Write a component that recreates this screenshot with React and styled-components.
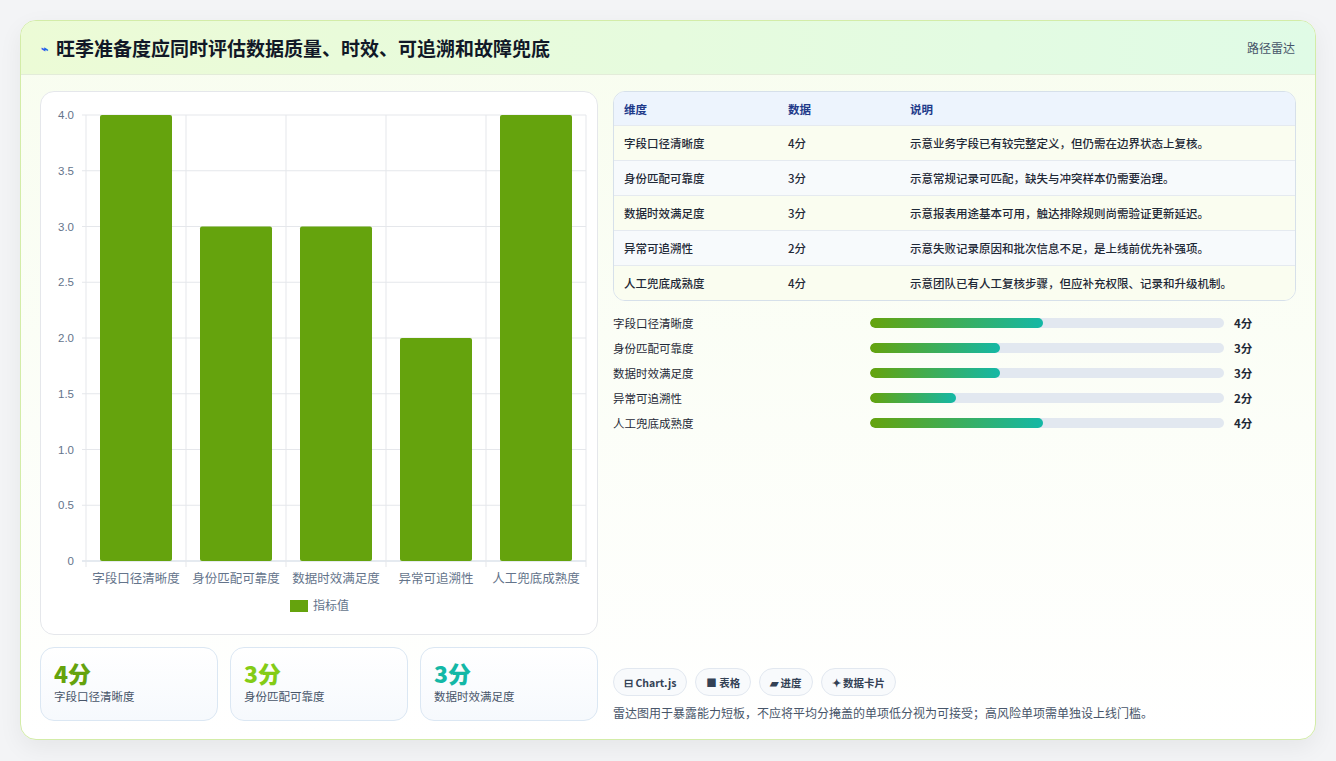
import React from "react";
import styled, { createGlobalStyle } from "styled-components";

const G = createGlobalStyle`
  html,body{margin:0;background:#f3f4f6;}
  body{font-family:"Noto Sans CJK SC","Noto Sans",sans-serif;}
  *{box-sizing:border-box;}
`;
const Page = styled.div`padding:20px;height:761px;`;
const Card = styled.div`
  width:1296px;height:720px;border:1px solid #d3eca8;border-radius:16px;overflow:hidden;
  background:linear-gradient(180deg,#f8fdef 0%,#ffffff 100%);
  box-shadow:0 8px 24px rgba(0,0,0,.06);display:flex;flex-direction:column;`;
const Header = styled.div`
  height:56px;display:flex;align-items:center;justify-content:space-between;padding:0 20px;
  background:linear-gradient(90deg,#ecfbd6,#e0fbe6);border-bottom:1px solid #e3ecd9;`;
const Title = styled.h1`margin:0;font-size:19px;font-weight:700;color:#111827;display:flex;align-items:center;gap:8px;`;
const Tag = styled.span`font-size:12px;color:#475569;`;
const Body = styled.div`flex:1;display:grid;grid-template-columns:558px 683px;gap:15px;padding:16px 19px 18px;`;
const Col = styled.div`display:flex;flex-direction:column;gap:12px;min-height:0;`;
const ChartBox = styled.div`height:544px;background:#fff;border:1px solid #e5e7eb;border-radius:14px;`;
const Stats = styled.div`display:grid;grid-template-columns:repeat(3,1fr);gap:12px;`;
const Stat = styled.div`height:74px;border:1px solid #dbe7f3;border-radius:14px;background:linear-gradient(180deg,#fff,#f6f9fd);padding:10px 13px;`;
const Num = styled.div`font-size:23px;font-weight:800;color:${p=>p.c};line-height:30px;`;
const StatLabel = styled.div`font-size:11.5px;color:#475569;`;
const Table = styled.div`border:1px solid #d6e0ea;border-radius:12px;overflow:hidden;background:#fff;`;
const Row = styled.div`display:grid;grid-template-columns:164px 122px 1fr;height:${p=>p.h}px;align-items:center;padding:0 10px;
  font-size:11.5px;color:${p=>p.head?"#1e3a8a":"#1f2937"};font-weight:${p=>p.head?700:500};
  background:${p=>p.head?"#edf4fd":p.alt?"#f7fafc":"#fafdf0"};border-top:${p=>p.first?"none":"1px solid #e5eaf0"};`;
const Bars = styled.div`display:flex;flex-direction:column;gap:7px;margin-top:1px;`;
const BarRow = styled.div`display:grid;grid-template-columns:257px 354px 1fr;gap:0;align-items:center;height:18px;font-size:11.5px;color:#1f2937;`;
const Track = styled.div`height:10px;border-radius:5px;background:#e2e8f0;overflow:hidden;`;
const Fill = styled.div`height:100%;border-radius:5px;background:linear-gradient(90deg,#65a30d,#14b8a6);`;
const Val = styled.span`padding-left:10px;font-weight:700;`;
const Spacer = styled.div`flex:1;`;
const Chips = styled.div`display:flex;gap:8px;`;
const Chip = styled.span`height:28px;padding:0 10px;border:1px solid #e2e8f0;border-radius:14px;background:#f8fafc;font-size:10.5px;font-weight:600;color:#334155;display:flex;align-items:center;gap:3px;`;
const Note = styled.p`margin:8px 0 0;font-size:12px;color:#475569;`;

const data=[["字段口径清晰度",4,"示意业务字段已有较完整定义，但仍需在边界状态上复核。"],["身份匹配可靠度",3,"示意常规记录可匹配，缺失与冲突样本仍需要治理。"],["数据时效满足度",3,"示意报表用途基本可用，触达排除规则尚需验证更新延迟。"],["异常可追溯性",2,"示意失败记录原因和批次信息不足，是上线前优先补强项。"],["人工兜底成熟度",4,"示意团队已有人工复核步骤，但应补充权限、记录和升级机制。"]];
const pct={4:48.9,3:36.7,2:24.3};

function Chart(){
  const x0=45,x1=545,y0=23,y1=469;
  const ticks=[4,3.5,3,2.5,2,1.5,1,0.5,0];
  const yv=v=>y1-(v/4)*(y1-y0);
  return <svg width="558" height="544" style={{display:"block"}}>
    {ticks.map(t=><g key={t}><line x1={x0-4} x2={x1} y1={yv(t)} y2={yv(t)} stroke={t===0?"#cbd5e1":"#e5e7eb"}/>
      <text x={x0-12} y={yv(t)+4} textAnchor="end" fontSize="11.5" fill="#64748b" fontFamily="Liberation Sans">{t===0?"0":t.toFixed(1)}</text></g>)}
    {[0,1,2,3,4,5].map(i=><line key={i} x1={x0+i*100} x2={x0+i*100} y1={y0} y2={y1+6} stroke="#e5e7eb"/>)}
    {data.map((d,i)=><g key={i}><rect x={x0+14+i*100} y={yv(d[1])} width="72" height={y1-yv(d[1])} fill="#65a30d" rx="2"/>
      <text x={x0+50+i*100} y={y1+22} textAnchor="middle" fontSize="12.5" fill="#64748b">{d[0]}</text></g>)}
    <rect x="249" y="508" width="18" height="12" fill="#65a30d"/>
    <text x="272" y="518" fontSize="12" fill="#64748b">指标值</text>
  </svg>;
}

export default function App(){
  return <Page><G/><Card>
    <Header><Title><span style={{fontSize:12,color:"#2563eb"}}>⌁</span>旺季准备度应同时评估数据质量、时效、可追溯和故障兜底</Title><Tag>路径雷达</Tag></Header>
    <Body>
      <Col>
        <ChartBox><Chart/></ChartBox>
        <Stats>
          <Stat><Num c="#65a30d">4分</Num><StatLabel>字段口径清晰度</StatLabel></Stat>
          <Stat><Num c="#84cc16">3分</Num><StatLabel>身份匹配可靠度</StatLabel></Stat>
          <Stat><Num c="#14b8a6">3分</Num><StatLabel>数据时效满足度</StatLabel></Stat>
        </Stats>
      </Col>
      <Col>
        <Table>
          <Row head first h={33}><span>维度</span><span>数据</span><span>说明</span></Row>
          {data.map((d,i)=><Row key={i} alt={i%2===1} h={35}><span>{d[0]}</span><span>{d[1]}分</span><span>{d[2]}</span></Row>)}
        </Table>
        <Bars>{data.map((d,i)=><BarRow key={i}><span>{d[0]}</span><Track><Fill style={{width:pct[d[1]]+"%"}}/></Track><Val>{d[1]}分</Val></BarRow>)}</Bars>
        <Spacer/>
        <div>
          <Chips><Chip>⊟ Chart.js</Chip><Chip>■ 表格</Chip><Chip>▰ 进度</Chip><Chip>✦ 数据卡片</Chip></Chips>
          <Note>雷达图用于暴露能力短板，不应将平均分掩盖的单项低分视为可接受；高风险单项需单独设上线门槛。</Note>
        </div>
      </Col>
    </Body>
  </Card></Page>;
}
